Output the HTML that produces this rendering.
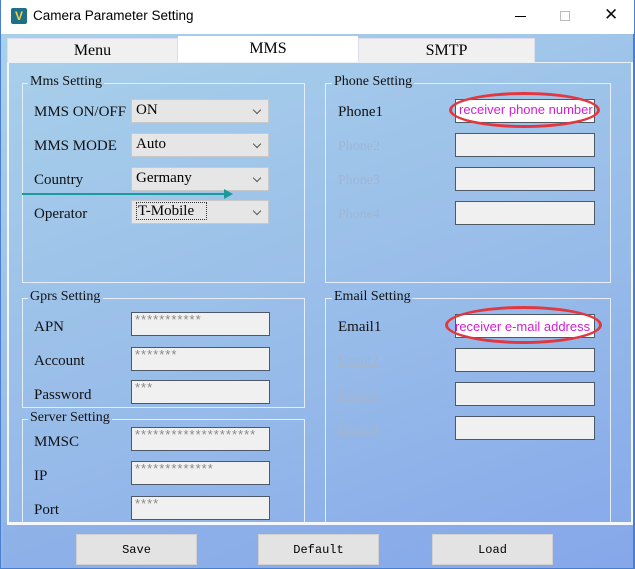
<!DOCTYPE html>
<html><head><meta charset="utf-8"><style>
*{box-sizing:border-box;margin:0;padding:0}
body{width:635px;height:569px;position:relative;overflow:hidden;background:#4a7fd0;font-family:"Liberation Serif",serif;}
.a{position:absolute}
#title{left:1px;top:0;width:633px;height:34px;background:#fff;}
#client{left:1px;top:34px;width:632px;height:534px;background:linear-gradient(160deg,#a9d0ea 0%,#98bce9 55%,#86a8ea 100%);}
.tab{position:absolute;top:38px;height:25px;background:#f0f0f0;border:1px solid #dde;font-size:16px;text-align:center;line-height:24px;color:#000}
#panel{left:7px;top:62px;width:626px;height:463px;border:2px solid #f4f8fc;border-top:1px solid #e8f0f8;}
.gb{position:absolute;border:1px solid #e4eef8;border-top:none}
.tl{position:absolute;height:1px;background:#e4eef8}
.gl{position:absolute;font-size:14px;color:#111;padding:0 3px;}
.lb{position:absolute;font-size:15px;color:#111}
.dl{position:absolute;font-size:14px;color:#9fb6d2}
.in{position:absolute;background:#f0f0f0;border:1px solid #4d5a66;font-size:13px;color:#888;padding:0 0 0 3px;line-height:14px;font-family:"Liberation Sans",sans-serif;letter-spacing:1px;overflow:hidden;white-space:nowrap}
.sel{position:absolute;left:131px;width:138px;height:24px;background:#e6e6e6;border:1px solid #c8c8c8;font-size:15px;padding:2px 4px;color:#000}
.sel:after{content:"";position:absolute;right:8px;top:7px;width:5px;height:5px;border-right:1px solid #555;border-bottom:1px solid #555;transform:rotate(45deg)}
.btn{position:absolute;top:534px;width:121px;height:31px;background:#e3e3e3;border:1px solid #d0d0d0;font-family:"Liberation Mono",monospace;font-size:12px;text-align:center;line-height:30px;color:#000}
.ov{position:absolute;border:3px solid #e2373f;border-radius:50%}
.mg{position:absolute;color:#d21fd0;font-family:"Liberation Sans",sans-serif;font-size:13px}
</style></head><body>
<div class="a" id="title">
 <div class="a" style="left:10px;top:8px;width:16px;height:16px;background:#1f6f86;border-radius:2px;color:#f3d24a;font:bold 12px 'Liberation Sans',sans-serif;text-align:center;line-height:16px">V</div>
 <div class="a" style="left:32px;top:8px;font:13.5px 'Liberation Sans',sans-serif;color:#000">Camera Parameter Setting</div>
 <div class="a" style="left:514px;top:16px;width:11px;height:1px;background:#000"></div>
 <div class="a" style="left:559px;top:11px;width:10px;height:10px;border:1px solid #bbb"></div>
 <div class="a" style="left:603px;top:5px;font:17px 'Liberation Sans',sans-serif;color:#111">✕</div>
</div>
<div class="a" id="client"></div>
<div class="tab" style="left:7px;width:171px">Menu</div>
<div class="tab" style="left:178px;width:180px;top:36px;height:27px;background:#fff;border-color:#fff">MMS</div>
<div class="tab" style="left:358px;width:177px">SMTP</div>
<div class="a" id="panel"></div>

<div class="gb" style="left:22px;top:83px;width:283px;height:200px"></div>
<div class="tl" style="left:22px;top:83px;width:6px"></div><div class="tl" style="left:104px;top:83px;width:201px"></div>
<div class="gl" style="left:27px;top:74px;">Mms Setting</div>
<div class="lb" style="left:34px;top:104px">MMS ON/OFF</div>
<div class="lb" style="left:34px;top:138px">MMS MODE</div>
<div class="lb" style="left:34px;top:172px">Country</div>
<div class="lb" style="left:34px;top:206px">Operator</div>
<div class="sel" style="top:99px">ON</div>
<div class="sel" style="top:133px">Auto</div>
<div class="sel" style="top:167px">Germany</div>
<div class="sel" style="top:200px"><span style="border:1px dotted #333;padding:0 12px 0 1px">T-Mobile</span></div>
<div class="a" style="left:22px;top:193px;width:205px;height:2px;background:#1a9a9a"></div>
<div class="a" style="left:224px;top:189px;width:0;height:0;border-left:9px solid #1a9a9a;border-top:5px solid transparent;border-bottom:5px solid transparent"></div>

<div class="gb" style="left:22px;top:298px;width:283px;height:110px"></div>
<div class="tl" style="left:22px;top:298px;width:6px"></div><div class="tl" style="left:103px;top:298px;width:202px"></div>
<div class="gl" style="left:27px;top:289px;">Gprs Setting</div>
<div class="lb" style="left:34px;top:319px">APN</div>
<div class="lb" style="left:34px;top:353px">Account</div>
<div class="lb" style="left:34px;top:387px">Password</div>
<div class="in" style="left:131px;top:312px;width:139px;height:24px">***********</div>
<div class="in" style="left:131px;top:347px;width:139px;height:24px">*******</div>
<div class="in" style="left:131px;top:380px;width:139px;height:24px">***</div>

<div class="gb" style="left:22px;top:419px;width:283px;height:110px"></div>
<div class="tl" style="left:22px;top:419px;width:6px"></div><div class="tl" style="left:112px;top:419px;width:193px"></div>
<div class="gl" style="left:27px;top:410px;">Server Setting</div>
<div class="lb" style="left:34px;top:434px">MMSC</div>
<div class="lb" style="left:34px;top:468px">IP</div>
<div class="lb" style="left:34px;top:502px">Port</div>
<div class="in" style="left:131px;top:427px;width:139px;height:24px">********************</div>
<div class="in" style="left:131px;top:461px;width:139px;height:24px">*************</div>
<div class="in" style="left:131px;top:496px;width:139px;height:24px">****</div>

<div class="gb" style="left:325px;top:83px;width:286px;height:200px"></div>
<div class="tl" style="left:325px;top:83px;width:7px"></div><div class="tl" style="left:414px;top:83px;width:197px"></div>
<div class="gl" style="left:331px;top:74px;">Phone Setting</div>
<div class="lb" style="left:338px;top:104px">Phone1</div>
<div class="dl" style="left:338px;top:139px">Phone2</div>
<div class="dl" style="left:338px;top:173px">Phone3</div>
<div class="dl" style="left:338px;top:207px">Phone4</div>
<div class="in" style="left:455px;top:99px;width:140px;height:24px;background:#fff"></div>
<div class="in" style="left:455px;top:133px;width:140px;height:24px"></div>
<div class="in" style="left:455px;top:167px;width:140px;height:24px"></div>
<div class="in" style="left:455px;top:201px;width:140px;height:24px"></div>
<div class="ov" style="left:449px;top:92px;width:151px;height:36px"></div>
<div class="mg" style="left:459px;top:102px">receiver phone number</div>

<div class="gb" style="left:325px;top:298px;width:286px;height:231px"></div>
<div class="tl" style="left:325px;top:298px;width:7px"></div><div class="tl" style="left:412px;top:298px;width:199px"></div>
<div class="gl" style="left:331px;top:289px;">Email Setting</div>
<div class="lb" style="left:338px;top:319px">Email1</div>
<div class="dl" style="left:338px;top:354px;text-decoration:underline">Email2</div>
<div class="dl" style="left:338px;top:388px;text-decoration:underline">Email3</div>
<div class="dl" style="left:338px;top:422px;text-decoration:underline">Email4</div>
<div class="in" style="left:455px;top:314px;width:140px;height:24px;background:#fff"></div>
<div class="in" style="left:455px;top:348px;width:140px;height:24px"></div>
<div class="in" style="left:455px;top:382px;width:140px;height:24px"></div>
<div class="in" style="left:455px;top:416px;width:140px;height:24px"></div>
<div class="ov" style="left:445px;top:306px;width:157px;height:38px"></div>
<div class="mg" style="left:455px;top:319px">receiver e-mail address</div>

<div class="a" style="left:3px;top:522px;width:630px;height:46px;background:linear-gradient(160deg,#8fb2e8,#86a8ea)"></div>
<div class="a" style="left:7px;top:522px;width:626px;height:3px;background:#f4f8fc"></div>
<div class="btn" style="left:76px">Save</div>
<div class="btn" style="left:258px">Default</div>
<div class="btn" style="left:432px">Load</div>
</body></html>
